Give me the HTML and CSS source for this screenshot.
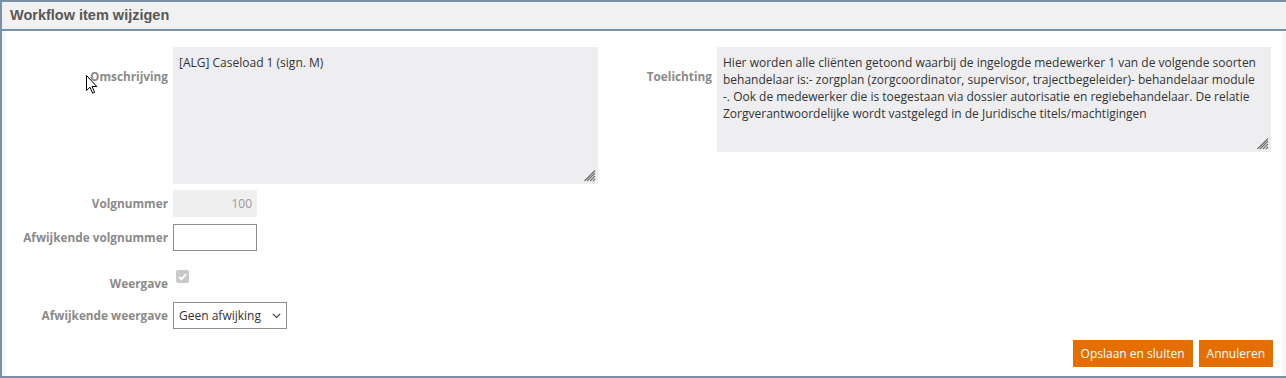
FILE: index.html
```html
<!DOCTYPE html>
<html lang="nl">
<head>
<meta charset="utf-8">
<title>Workflow item wijzigen</title>
<link rel="stylesheet" href="styles.css">
</head>
<body>
<div class="dialog">
  <div class="dialog-header">Workflow item wijzigen</div>
  <div class="dialog-body">
    <div class="row-top">
      <label class="lbl lbl-top">Omschrijving</label>
      <div class="area-wrap">
        <textarea class="area area-oms" readonly>[ALG] Caseload 1 (sign. M)</textarea>
        <svg class="grip" width="12" height="12" viewBox="0 0 12 12"><path d="M11 3 L3 11 M11 6 L6 11 M11 9 L9 11 M11 0.5 L0.5 11" fill="none" stroke="#6f6f6f" stroke-width="1.1"/></svg>
      </div>
      <label class="lbl lbl-top">Toelichting</label>
      <div class="area-wrap">
        <textarea class="area area-toel" readonly wrap="off">Hier worden alle cliënten getoond waarbij de ingelogde medewerker 1 van de volgende soorten
behandelaar is:- zorgplan (zorgcoordinator, supervisor, trajectbegeleider)- behandelaar module
-. Ook de medewerker die is toegestaan via dossier autorisatie en regiebehandelaar. De relatie
Zorgverantwoordelijke wordt vastgelegd in de Juridische titels/machtigingen</textarea>
        <svg class="grip" width="12" height="12" viewBox="0 0 12 12"><path d="M11 3 L3 11 M11 6 L6 11 M11 9 L9 11 M11 0.5 L0.5 11" fill="none" stroke="#6f6f6f" stroke-width="1.1"/></svg>
      </div>
    </div>
    <div class="row">
      <label class="lbl">Volgnummer</label>
      <input class="inp inp-ro" type="text" value="100" readonly>
    </div>
    <div class="row">
      <label class="lbl">Afwijkende volgnummer</label>
      <input class="inp inp-edit" type="text" value="">
    </div>
    <div class="row row-check">
      <label class="lbl lbl-end">Weergave</label>
      <span class="check">
        <svg width="13" height="13" viewBox="0 0 13 13"><rect x="0" y="0" width="13" height="13" rx="2" fill="#c9c9cb"/><path d="M3 6.8 L5.4 9.1 L10.2 4" fill="none" stroke="#ffffff" stroke-width="1.8"/></svg>
      </span>
    </div>
    <div class="row">
      <label class="lbl">Afwijkende weergave</label>
      <div class="select-wrap">
        <select class="sel"><option>Geen afwijking</option></select>
        <svg class="chev" width="9" height="6" viewBox="0 0 9 6"><path d="M0.8 0.8 L4.5 4.5 L8.2 0.8" fill="none" stroke="#444" stroke-width="1.2"/></svg>
      </div>
    </div>
    <div class="actions">
      <button class="btn">Opslaan en sluiten</button>
      <button class="btn">Annuleren</button>
    </div>
  </div>
</div>
<svg class="cursor" width="13" height="20" viewBox="0 0 13 20"><path d="M0.5 0.5 L0.5 15.5 L4 12.2 L6.6 18.3 L8.6 17.4 L6.1 11.5 L10.8 11.5 Z" fill="#ffffff" stroke="#000000" stroke-width="1"/></svg>
</body>
</html>
```

FILE: styles.css
```css
html, body {
  margin: 0;
  padding: 0;
  background: #ffffff;
}
body {
  font-family: "Open Sans", "Liberation Sans", sans-serif;
  font-size: 12px;
  color: #333333;
  width: 1286px;
  height: 378px;
  position: relative;
  overflow: hidden;
}
.dialog {
  box-sizing: border-box;
  width: 1286px;
  height: 378px;
  border-top: 2px solid #7891a9;
  border-left: 2px solid #7891a9;
  border-bottom: 2px solid #7891a9;
  display: flex;
  flex-direction: column;
}
.dialog-header {
  height: 27px;
  background: #f1f1f1;
  border-bottom: 2px solid #7891a9;
  font-family: "Liberation Sans", Arial, sans-serif;
  font-weight: bold;
  font-size: 14.5px;
  color: #575757;
  line-height: 27px;
  padding-left: 8px;
}
.dialog-body {
  flex: 1;
  border-left: 4px solid #f6f6f6;
  border-right: 4px solid #f6f6f6;
  padding: 16px 11px 0 0;
  display: flex;
  flex-direction: column;
}
.row-top {
  display: grid;
  grid-template-columns: 162px 425px 1fr 554px;
  column-gap: 5px;
  align-items: start;
  height: 137px;
}
.lbl {
  font-weight: bold;
  font-size: 11.8px;
  color: #8a8a8a;
  text-align: right;
  line-height: 17px;
  white-space: nowrap;
}
.lbl-top {
  padding-top: 21px;
}
.area-wrap {
  position: relative;
  line-height: 0;
}
.area {
  display: block;
  box-sizing: border-box;
  border: none;
  background: #eeeef0;
  font-family: "Open Sans", "Liberation Sans", sans-serif;
  font-size: 12px;
  line-height: 17px;
  color: #333333;
  padding: 7px 6px;
  margin: 0;
  resize: none;
  outline: none;
  overflow: hidden;
}
.area-oms {
  height: 137px;
  width: 425px;
}
.area-toel {
  height: 105px;
  width: 554px;
  white-space: pre;
}
.grip {
  position: absolute;
  right: 2px;
  bottom: 2px;
}
.row {
  display: grid;
  grid-template-columns: 162px auto;
  column-gap: 5px;
  align-items: center;
  justify-items: start;
  margin-top: 6px;
  height: 27px;
}
.row .lbl {
  justify-self: end;
}
.row + .row {
  margin-top: 7px;
}
.inp {
  box-sizing: border-box;
  width: 84px;
  height: 27px;
  font-family: "Open Sans", "Liberation Sans", sans-serif;
  font-size: 12px;
  margin: 0;
  outline: none;
}
.inp-ro {
  border: none;
  background: #efefef;
  color: #9a9a9a;
  text-align: right;
  padding: 0 5px;
}
.inp-edit {
  border: 1px solid #8e8e8e;
  background: #ffffff;
  padding: 0 5px;
}
.row.row-check {
  height: 37px;
  align-items: start;
}
.lbl-end {
  align-self: end;
  padding-bottom: 3px;
}
.check {
  display: block;
  margin-top: 12px;
  margin-left: 3px;
  width: 13px;
  height: 13px;
}
.check svg {
  display: block;
}
.select-wrap {
  position: relative;
  width: 114px;
  height: 27px;
}
.sel {
  box-sizing: border-box;
  width: 114px;
  height: 27px;
  border: 1px solid #8e8e8e;
  background: #ffffff;
  font-family: "Open Sans", "Liberation Sans", sans-serif;
  font-size: 12px;
  color: #333333;
  padding: 0 0 0 5px;
  margin: 0;
  appearance: none;
  -webkit-appearance: none;
  border-radius: 0;
  outline: none;
}
.chev {
  position: absolute;
  right: 6px;
  top: 11px;
}
.actions {
  display: flex;
  justify-content: flex-end;
  gap: 6px;
  margin-top: 11px;
  margin-right: -2px;
}
.btn {
  height: 27px;
  border: none;
  background: #e46f00;
  color: #ffffff;
  font-family: "Open Sans", "Liberation Sans", sans-serif;
  font-size: 12px;
  padding: 0 8px;
  margin: 0;
  cursor: pointer;
}
.cursor {
  position: absolute;
  left: 86px;
  top: 75px;
}
```
